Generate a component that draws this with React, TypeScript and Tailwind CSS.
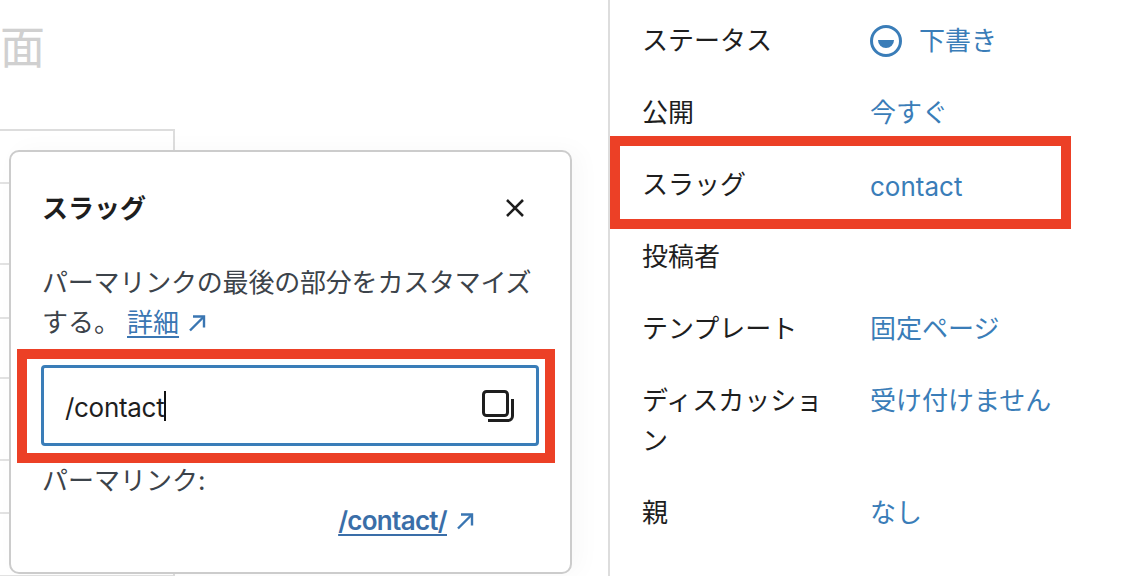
const sans = 'font-["Inter","Noto_Sans_CJK_JP",sans-serif]';

// 背景の表の行の高さ
const tableRows = ['h-[53px]', 'h-[81px]', 'h-[54px]', 'h-[60px]', 'h-[82px]', 'h-[53px]', 'h-[63px]'];

function ExternalIcon() {
  return (
    <svg width="20" height="20" viewBox="0 0 20 20" fill="none" stroke="#3a76b2" strokeWidth="2.4">
      <path d="M3 17.5 16.5 4" />
      <path d="M6 3.5h11v11" />
    </svg>
  );
}

function CopyIcon() {
  return (
    <svg width="32" height="32" viewBox="0 0 32 32" fill="none" stroke="#1e1e1e" strokeWidth="3">
      <rect x="1.5" y="1.5" width="24" height="24" rx="3" />
      <path d="M30.5 9v17a4.5 4.5 0 0 1-4.5 4.5H6" />
    </svg>
  );
}

function StatusIcon() {
  return (
    <svg width="32" height="32" viewBox="0 0 32 32" className="mr-[17px]">
      <circle cx="16" cy="16" r="14.5" fill="none" stroke="#3a7db8" strokeWidth="3" />
      <path d="M8 15h16a8 8 0 0 1-16 0z" fill="#3a7db8" />
    </svg>
  );
}

function SideRow({ label, children, marked }: { label: string; children?: React.ReactNode; marked?: boolean }) {
  return (
    <div className="relative flex h-[40px]">
      <div className="w-[228px] shrink-0 text-[#1e1e1e]">{label}</div>
      <div className="flex items-center text-[#3a7db8]">{children}</div>
      {marked && <div className="absolute -left-[32px] top-[-29px] h-[93px] w-[461px] border-[10px] border-[#ec4026]" />}
    </div>
  );
}

function Popover() {
  return (
    <div className="absolute left-[9px] top-[150px] flex h-[424px] w-[563px] flex-col rounded-[10px] border-2 border-[#cccccc] bg-white px-[31px] shadow-[8px_0_24px_rgba(0,0,0,0.03)]">
      <div className="mt-[37px] flex h-[40px] items-center justify-between">
        <div className="font-bold text-[#1e1e1e]">スラッグ</div>
        <svg width="20" height="20" viewBox="0 0 20 20" stroke="#1e1e1e" strokeWidth="2.6" className="-mt-[2px] mr-[14px]">
          <path d="M2 2l16 16M18 2 2 18" />
        </svg>
      </div>
      <div className="mt-[34px] whitespace-nowrap text-[#3c434a]">
        <div className="tracking-[-0.2px]">パーマリンクの最後の部分をカスタマイズ</div>
        <div className="flex items-center">
          する。
          <span className="ml-[7px] text-[#3a76b2] underline underline-offset-[4px]">詳細</span>
          <span className="ml-[8px]"><ExternalIcon /></span>
        </div>
      </div>
      <div className="relative -ml-px mt-[22px] flex h-[81px] w-[498px] items-center justify-between rounded-[4px] border-[3px] border-[#3a7db8] pl-[21px] pr-[22px]">
        <div className="flex items-center tracking-[-0.3px] text-[#1e1e1e]">
          <span className="mt-[4px]">/contact</span>
          <span className="h-[30px] w-[2px] bg-[#111111]" />
        </div>
        <CopyIcon />
        <div className="absolute -left-[27px] -top-[19px] h-[114px] w-[538px] border-[10px] border-[#ec4026]" />
      </div>
      <div className="mt-[15px] text-[#3c434a]">パーマリンク:</div>
      <div className="flex items-center justify-end pr-[64px]">
        <span className="font-semibold tracking-[-0.7px] text-[#3a6ea8] underline underline-offset-[4px]">/contact/</span>
        <span className="ml-[8px]"><ExternalIcon /></span>
      </div>
    </div>
  );
}

export default function App() {
  return (
    <div className={`flex h-[576px] w-[1138px] overflow-hidden bg-white text-[26px] leading-[40px] ${sans}`}>
      <div className="relative w-[608px] shrink-0">
        <div className="mt-[22px] text-[45px] leading-[52px] text-[#d0d0d0]">面</div>
        <div className="mt-[55px] w-[175px] border-r-2 border-t-2 border-[#dddddd]">
          {tableRows.map((h, i) => (
            <div key={i} className={`${h} border-b-2 border-[#e2e2e2]`} />
          ))}
        </div>
        <Popover />
      </div>
      <div className="flex flex-1 flex-col gap-[32px] border-l-2 border-[#dddddd] pl-[32px] pt-[21px]">
        <SideRow label="ステータス">
          <StatusIcon />
          下書き
        </SideRow>
        <SideRow label="公開">今すぐ</SideRow>
        <SideRow label="スラッグ" marked><span className="mt-[4px]">contact</span></SideRow>
        <SideRow label="投稿者" />
        <SideRow label="テンプレート">固定ページ</SideRow>
        <div className="flex">
          <div className="w-[228px] shrink-0 pr-[40px] text-[#1e1e1e]">ディスカッション</div>
          <div className="text-[#3a7db8]">受け付けません</div>
        </div>
        <SideRow label="親">なし</SideRow>
      </div>
    </div>
  );
}
